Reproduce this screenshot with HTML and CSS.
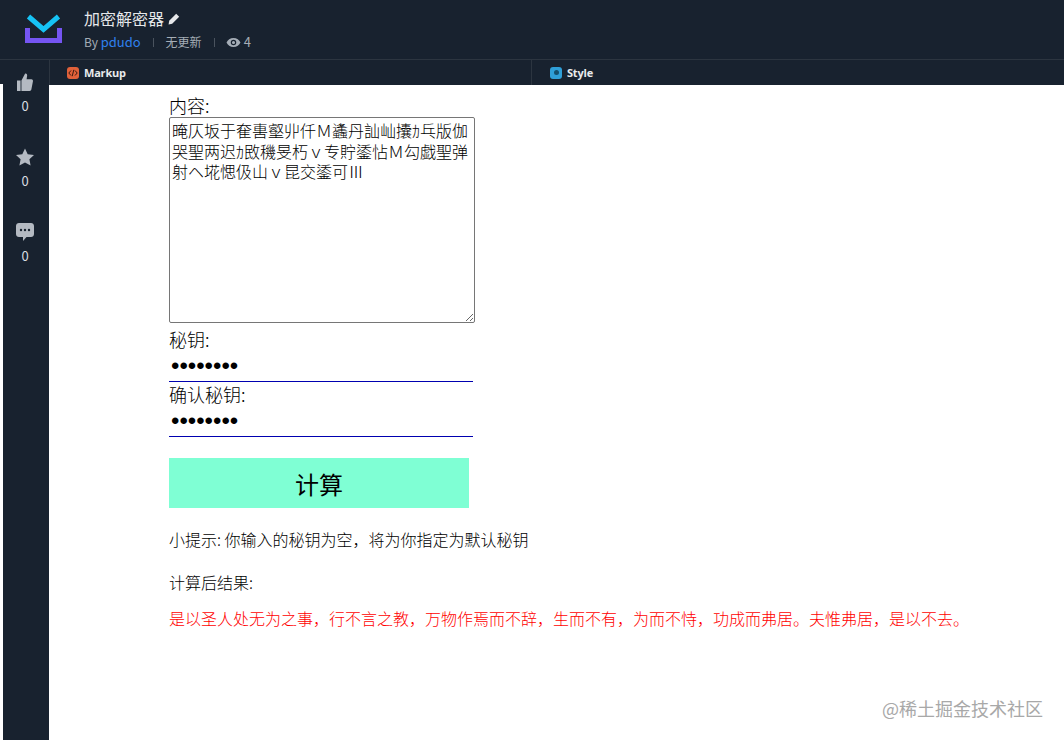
FILE: index.html
```html
<!DOCTYPE html>
<html>

<head>
    <title>加密解密器</title>
    <meta charset="utf-8">
    <link rel="stylesheet" href="styles.css">
</head>

<body>
    <div class="headPage">
        <svg class="logo" width="37" height="29" viewBox="0 0 37 29">
            <path d="M3.500 2.500 L18.500 15.500 L33.500 2.500" fill="none" stroke="#16c3f5" stroke-width="5" />
            <path d="M2.500 14 V26.500 H34.500 V14" fill="none" stroke="#7555f2" stroke-width="5" />
        </svg>
        <div class="headText">
            <div class="title">加密解密器
                <svg width="12" height="12" viewBox="0 0 12 12">
                    <path d="M8.200 .8 L11.200 3.800 L4.200 10.800 L.6 11.400 L1.200 7.800 Z" fill="#e6e8ea" />
                </svg>
            </div>
            <div class="meta">
                <span>By <a class="author">pdudo</a></span>
                <i class="sep"></i>
                <span>无更新</span>
                <i class="sep"></i>
                <span class="views">
                    <svg width="15" height="11" viewBox="0 0 16 12">
                        <path fill-rule="evenodd" fill="#a5adb6" d="M8 1 C4.500 1 1.600 3.100 .4 6 C1.600 8.900 4.500 11 8 11 C11.500 11 14.400 8.900 15.600 6 C14.400 3.100 11.500 1 8 1 Z M8 3 A3 3 0 1 1 8 9 A3 3 0 1 1 8 3 Z M8 4.300 A1.700 1.700 0 1 0 8 7.700 A1.700 1.700 0 1 0 8 4.300 Z" />
                    </svg>
                    4
                </span>
            </div>
        </div>
    </div>

    <div class="main">
        <div class="edgeStrip"></div>
        <div class="sidebar">
            <div class="stat">
                <svg width="16" height="18" viewBox="0 0 18 17" preserveAspectRatio="none">
                    <path fill="#b4bac2" d="M0 7 H4 V17 H0 Z M5 7 L9 .6 C10.600 .1 11.600 1.200 11.400 2.600 L10.800 6 H16.300 C17.500 6 18.200 7 17.900 8.100 L16.200 15.400 C16 16.400 15.200 17 14.200 17 H5 Z" />
                </svg>
                <span>0</span>
            </div>
            <div class="stat">
                <svg width="18" height="18" viewBox="0 0 18 17">
                    <path fill="#b4bac2" d="M9 0 L11.700 5.700 L18 6.500 L13.400 10.800 L14.600 17 L9 14 L3.400 17 L4.600 10.800 L0 6.500 L6.300 5.700 Z" />
                </svg>
                <span>0</span>
            </div>
            <div class="stat">
                <svg width="18" height="18" viewBox="0 0 18 18">
                    <path fill="#b4bac2" d="M3 0 H15 C16.700 0 18 1.300 18 3 V11 C18 12.700 16.700 14 15 14 H10.500 L7 18 V14 H3 C1.300 14 0 12.700 0 11 V3 C0 1.300 1.300 0 3 0 Z" />
                    <g fill="#18222f">
                        <circle cx="5" cy="7" r="1.200" />
                        <circle cx="9" cy="7" r="1.200" />
                        <circle cx="13" cy="7" r="1.200" />
                    </g>
                </svg>
                <span>0</span>
            </div>
        </div>

        <div class="rightCol">
            <div class="tabs">
                <div class="tab tabMarkup">
                    <span class="tabIcon markup">
                        <svg width="10" height="8" viewBox="0 0 10 8">
                            <path d="M3 1.500 L.8 4 L3 6.500 M7 1.500 L9.200 4 L7 6.500 M5.800 .8 L4.200 7.200" fill="none" stroke="#3a1a10" stroke-width="1" />
                        </svg>
                    </span>Markup
                </div>
                <div class="tab">
                    <span class="tabIcon style"><b></b></span>Style
                </div>
            </div>

            <div class="content">
                <label class="fieldLabel">内容:</label>
                <textarea class="inputText">晻仄坂于奞軎壑丱仟Ｍ蠭丹訕屾攮ｶ乓版伽
哭聖两迟ｶ敃穖旻朽ｖ专貯鋈怗Ｍ勾戯聖弹
射ヘ埖愢伋山ｖ昆交鋈可Ⅲ</textarea>
                <label class="fieldLabel">秘钥:</label>
                <input class="secret" type="password" value="12345678">
                <label class="fieldLabel">确认秘钥:</label>
                <input class="secret" type="password" value="12345678">
                <button class="calc">计算</button>
                <p class="tip">小提示: 你输入的秘钥为空，将为你指定为默认秘钥</p>
                <p class="tip">计算后结果:</p>
                <p class="tip result">是以圣人处无为之事，行不言之教，万物作焉而不辞，生而不有，为而不恃，功成而弗居。夫惟弗居，是以不去。</p>
            </div>
        </div>
    </div>

    <div class="watermark">@稀土掘金技术社区</div>
</body>

</html>
```

FILE: styles.css
```css
* {
    box-sizing: border-box
}

html,
body {
    height: 100%;
}

body {
    font-family: "Noto Sans CJK SC", "Noto Sans", sans-serif;
    margin: 0;
    display: flex;
    flex-direction: column;
    overflow: hidden;
    background: #fff;
}

.headPage {
    height: 60px;
    flex: none;
    display: flex;
    align-items: flex-start;
    background: #18222f;
    border-bottom: 1px solid #2c3540;
}

.logo {
    margin: 14px 0 0 25px;
}

.headText {
    margin-left: 22px;
}

.title {
    margin-top: 8px;
    height: 21px;
    font-size: 16px;
    line-height: 21px;
    color: #e6e8ea;
}

.meta {
    margin-top: 4px;
    display: flex;
    align-items: center;
    font-size: 12px;
    line-height: 18px;
    color: #a5adb6;
}

.author {
    color: #2f80ed;
    font-size: 13px;
}

.sep {
    width: 1px;
    height: 9px;
    margin: 0 12px;
    background: #4a535e;
}

.views {
    display: flex;
    align-items: center;
    gap: 3px;
    margin-left: -1px;
    font-size: 13px;
}

.main {
    flex: 1;
    display: flex;
    min-height: 0;
}

.edgeStrip {
    width: 3px;
    height: 24px;
    background: #18222f;
}

.sidebar {
    width: 46px;
    flex: none;
    padding: 13px 2px 0 0;
    display: flex;
    flex-direction: column;
    align-items: center;
    gap: 33px;
    background: #18222f;
}

.stat {
    height: 42px;
    display: flex;
    flex-direction: column;
    align-items: center;
    gap: 6px;
    font-size: 13px;
    line-height: 18px;
    color: #d8dce0;
}

.rightCol {
    flex: 1;
    display: flex;
    flex-direction: column;
}

.tabs {
    height: 25px;
    flex: none;
    display: flex;
    background: #18222f;
    border-left: 1px solid #2c3540;
    font-family: "Open Sans", sans-serif;
    font-size: 11px;
    font-weight: 700;
    letter-spacing: -.2px;
    color: #e8eaec;
}

.tab {
    flex: 1;
    display: flex;
    align-items: center;
    gap: 5px;
    padding-left: 17px;
}

.tabMarkup {
    flex: none;
    width: 482px;
    border-right: 1px solid #2c3540;
}

.tab + .tab {
    padding-left: 18px;
}

.tabIcon {
    width: 12px;
    height: 12px;
    border-radius: 3px;
    display: flex;
    align-items: center;
    justify-content: center;
}

.markup {
    background: #e0613a;
}

.style {
    background: #2f9fd8;
}

.style b {
    width: 5px;
    height: 5px;
    border-radius: 50%;
    background: #14506e;
}

.content {
    flex: 1;
    padding: 8px 0 0 120px;
    color: #000;
}

.fieldLabel {
    display: block;
    font-size: 18px;
    font-weight: 300;
    line-height: 24px;
}

.inputText {
    display: block;
    width: 306px;
    height: 206px;
    font-family: "Noto Sans CJK SC", sans-serif;
    font-size: 16px;
    font-weight: 300;
    line-height: 20.500px;
    padding: 2px;
    margin-bottom: 4px;
    color: #000;
    border: 1px solid #767676;
    border-radius: 2px;
    outline: none;
}

.secret {
    display: block;
    width: 304px;
    height: 31px;
    padding: 0 2px;
    font-size: 24px;
    border: none;
    border-bottom: 1px solid #0000b0;
    outline: none;
}

.calc {
    display: block;
    width: 300px;
    height: 50px;
    margin-top: 21px;
    border: none;
    padding: 0;
    background: #7fffd4;
    color: #000;
    font-family: inherit;
    font-size: 24px;
}

.tip {
    margin: 20px 0 0;
    font-size: 16px;
    font-weight: 300;
    line-height: 22px;
    white-space: nowrap;
}

.tip+.tip {
    margin-top: 21px;
}

.tip.result {
    margin-top: 14px;
    color: #f00;
}

.watermark {
    position: absolute;
    right: 21px;
    bottom: 21px;
    font-size: 18px;
    line-height: 22px;
    color: #a8a8a8;
}
```
